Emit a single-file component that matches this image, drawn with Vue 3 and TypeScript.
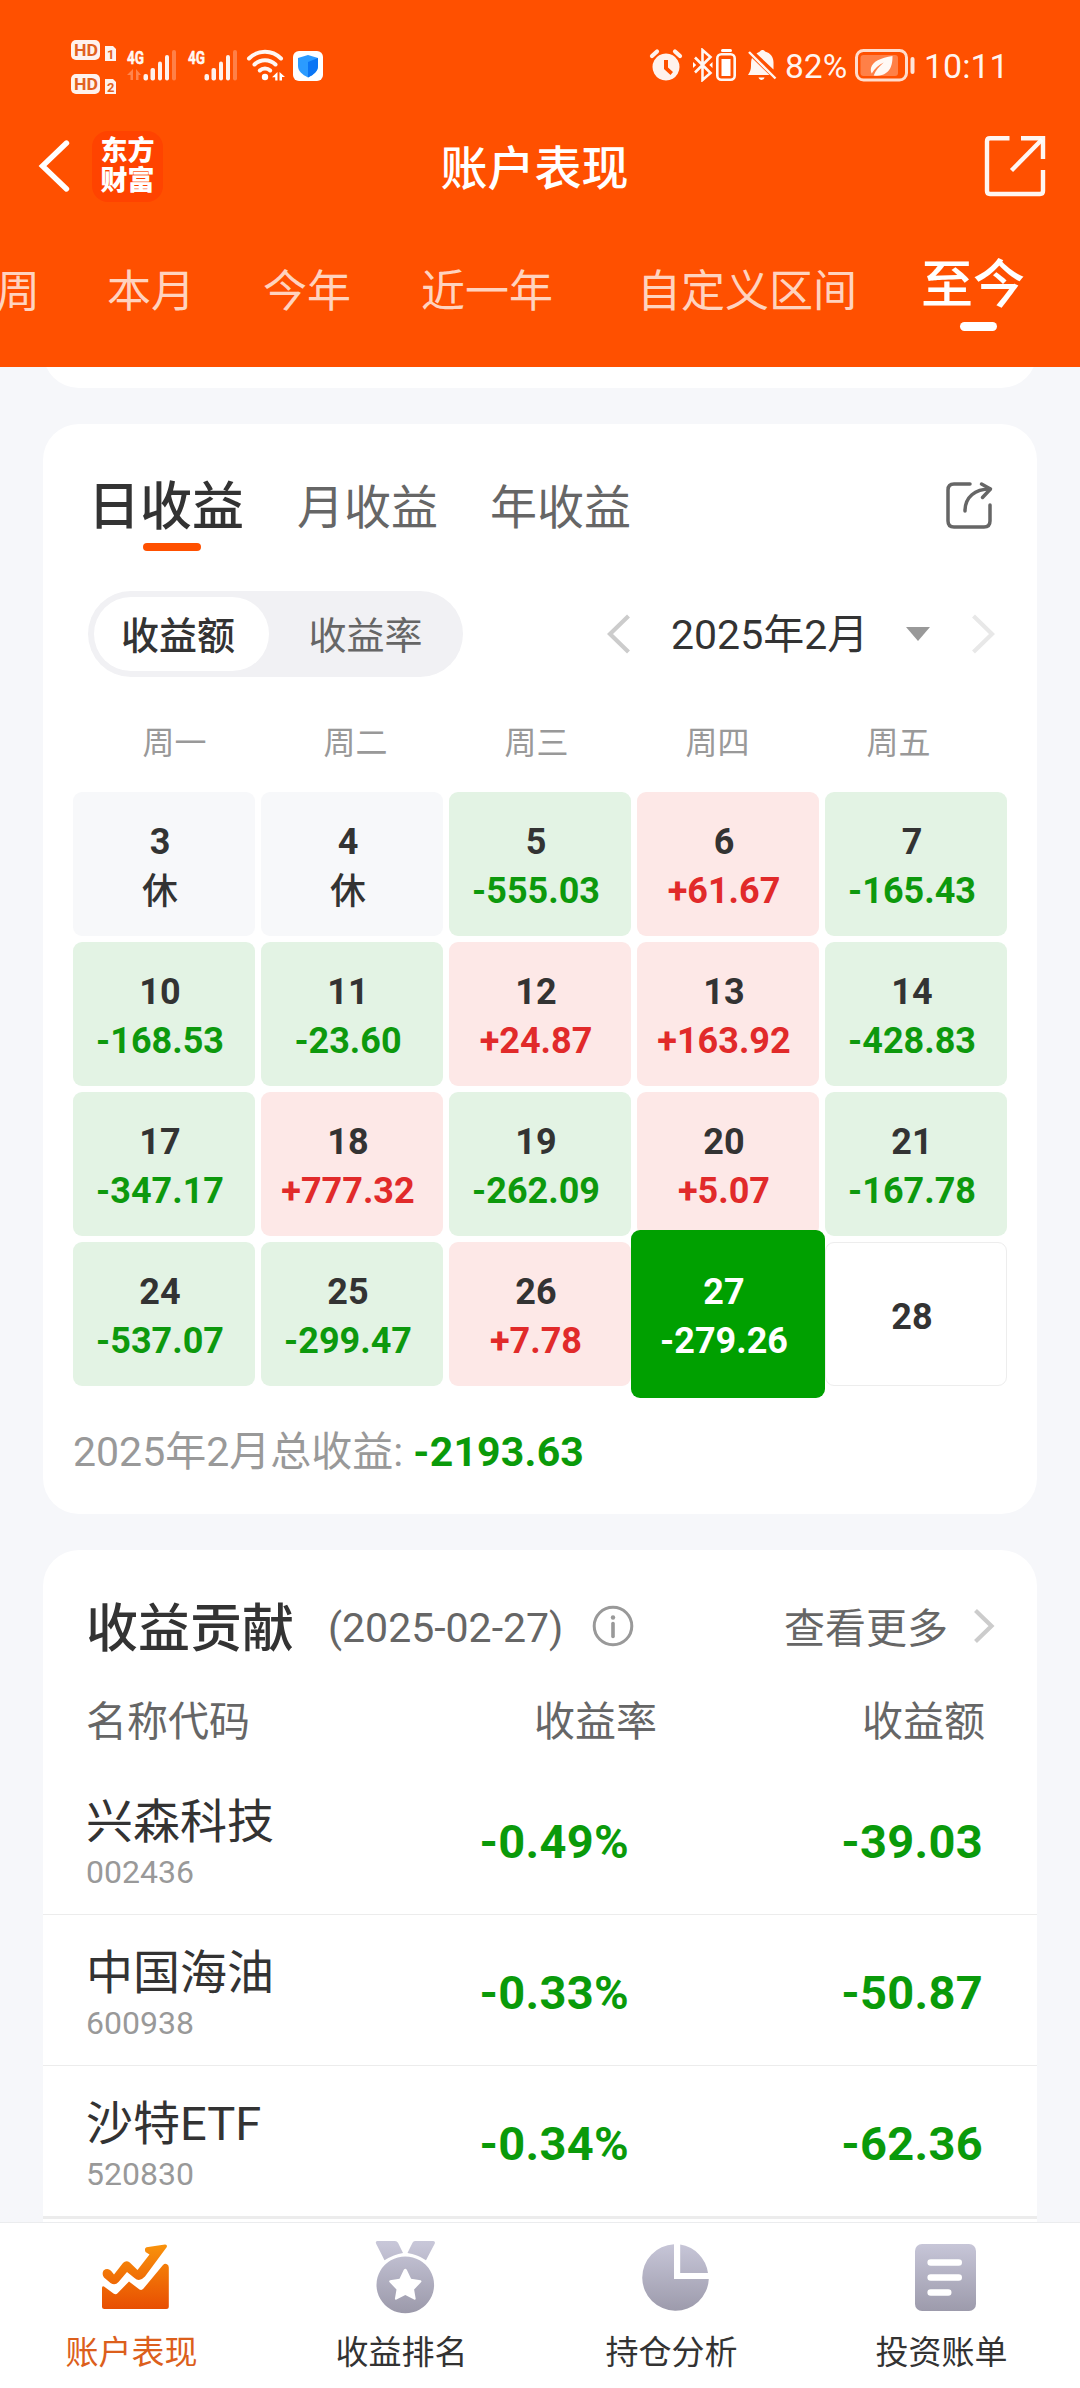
<script setup lang="ts">
interface DayCell {
  day: number
  value?: string
  kind: 'rest' | 'down' | 'up' | 'today' | 'empty'
}

interface Holding {
  name: string
  code: string
  rate: string
  amount: string
}

const ranges = [
  { label: '周', cls: 'r-week' },
  { label: '本月', cls: 'r-month' },
  { label: '今年', cls: 'r-ytd' },
  { label: '近一年', cls: 'r-year' },
  { label: '自定义区间', cls: 'r-custom' },
]

const weekdays = ['周一', '周二', '周三', '周四', '周五']

const days: DayCell[] = [
  { day: 3, value: '休', kind: 'rest' },
  { day: 4, value: '休', kind: 'rest' },
  { day: 5, value: '-555.03', kind: 'down' },
  { day: 6, value: '+61.67', kind: 'up' },
  { day: 7, value: '-165.43', kind: 'down' },
  { day: 10, value: '-168.53', kind: 'down' },
  { day: 11, value: '-23.60', kind: 'down' },
  { day: 12, value: '+24.87', kind: 'up' },
  { day: 13, value: '+163.92', kind: 'up' },
  { day: 14, value: '-428.83', kind: 'down' },
  { day: 17, value: '-347.17', kind: 'down' },
  { day: 18, value: '+777.32', kind: 'up' },
  { day: 19, value: '-262.09', kind: 'down' },
  { day: 20, value: '+5.07', kind: 'up' },
  { day: 21, value: '-167.78', kind: 'down' },
  { day: 24, value: '-537.07', kind: 'down' },
  { day: 25, value: '-299.47', kind: 'down' },
  { day: 26, value: '+7.78', kind: 'up' },
  { day: 27, value: '-279.26', kind: 'today' },
  { day: 28, kind: 'empty' },
]

const holdings: Holding[] = [
  { name: '兴森科技', code: '002436', rate: '-0.49%', amount: '-39.03' },
  { name: '中国海油', code: '600938', rate: '-0.33%', amount: '-50.87' },
  { name: '沙特ETF', code: '520830', rate: '-0.34%', amount: '-62.36' },
]
</script>

<template>
  <div class="screen">
    <header class="top">
      <div class="status">
        <svg class="st-left" width="260" height="60" viewBox="68 36 260 60">
          <g fill="#fff" fill-opacity=".93">
            <rect x="71" y="40" width="29" height="20" rx="5" />
            <path d="M105 46h8l3 3v12h-11z" />
            <rect x="71" y="74" width="29" height="20" rx="5" />
            <path d="M105 79h8l3 3v12h-11z" />
          </g>
          <g fill="#e2611f" class="hd">
            <text x="74" y="56" font-size="17" textLength="24" lengthAdjust="spacingAndGlyphs">HD</text>
            <text x="74" y="90" font-size="17" textLength="24" lengthAdjust="spacingAndGlyphs">HD</text>
            <text x="107" y="58.500" font-size="13">1</text>
            <text x="107" y="91.500" font-size="13">2</text>
          </g>
          <g fill="#fff" fill-opacity=".95" stroke="#fff" stroke-width=".5" class="hd">
            <text x="127" y="63.500" font-size="19" textLength="17" lengthAdjust="spacingAndGlyphs">4G</text>
            <text x="188" y="63.500" font-size="19" textLength="17" lengthAdjust="spacingAndGlyphs">4G</text>
          </g>
          <path d="M133 69v11h-2.500v-5h-3.500zM136 80v-11l5 6h-2.500v5z" fill="#fff" fill-opacity=".3" />
          <g v-for="dx in [0, 61]" :key="dx" :transform="`translate(${dx} 0)`" fill="#fff" fill-opacity=".93">
            <rect x="143.500" y="74" width="4.500" height="6.500" rx="2" />
            <rect x="150.500" y="68" width="4.500" height="12.500" rx="2" />
            <rect x="158" y="61.500" width="4" height="19" rx="2" />
            <rect x="165" y="55" width="4" height="25.500" rx="2" />
            <rect x="172" y="50" width="4" height="30.500" rx="2" fill-opacity=".28" />
          </g>
          <g fill="none" stroke="#fff" stroke-opacity=".95" stroke-width="4" stroke-linecap="round">
            <path d="M249 58.500C258 49.500 272 49.500 281 58.500" />
            <path d="M254.500 64.500C260.500 58.800 269.500 58.800 275.500 64.500" />
            <path d="M259.800 70.500C262.600 67.800 267.400 67.800 270.200 70.500" />
          </g>
          <circle cx="265" cy="77" r="3.200" fill="#fff" />
          <path d="M277.500 72v8.500h-2.300v-3.200H272zM279.500 80.500V72l5.500 5h-3v3.500z" fill="#fff" />
          <rect x="293" y="51" width="30" height="30" rx="6" fill="#fff" />
          <path d="M308 55l10 3v8c0 5-4 8.500-10 11.500-6-3-10-6.500-10-11.500v-8z" fill="#2b9bff" />
          <path d="M308 62l10-4v8c0 5-4 8.500-10 11.500z" fill="#0a75f5" />
        </svg>
        <svg class="st-icons" width="130" height="34" viewBox="648 48 130 34">
          <g fill="#fff" fill-opacity=".93">
            <path fill-rule="evenodd" d="M666 53.500a13.500 13.500 0 1 0 .01 0zM664 60h4v7.500l5 4.500-2.500 3-6.500-6z" />
          </g>
          <path d="M652 56l5-4.500M680 56l-5-4.500" stroke="#fff" stroke-opacity=".93" stroke-width="4.200" stroke-linecap="round" />
          <path d="M695 57.500L710.500 73l-8 7V50l8 7L695 72.500" fill="none" stroke="#fff" stroke-opacity=".95" stroke-width="2.600" />
          <path d="M693 62l3.200 3-3.200 3zM712.500 62l-3.200 3 3.200 3z" fill="#fff" />
          <rect x="717.300" y="54.300" width="17.400" height="25.400" rx="4" fill="none" stroke="#fff" stroke-opacity=".95" stroke-width="2.600" />
          <rect x="721.500" y="59" width="9" height="17" fill="#fff" />
          <rect x="721" y="49" width="11" height="3" rx="1.500" fill="#fff" />
          <path d="M756.500 53.500c1.500-1 3-1.600 3.500-2 1-2 4-2 5 0 5.500 1.500 8.500 5.500 8.500 11v7zM752 58l17.500 17H748c2-3 3-5.500 3-9 0-3.500 0-5.500 1-8z" fill="#fff" fill-opacity=".95" />
          <path d="M749 52l26.500 26.500" stroke="#fff" stroke-opacity=".95" stroke-width="2.400" />
          <path d="M758.500 77.500h6c-1 3.200-5 3.200-6 0z" fill="#fff" />
        </svg>
        <span class="st-pct">82%</span>
        <svg class="st-batt" width="62" height="34" viewBox="854 48 62 34">
          <rect x="856.500" y="50.500" width="50" height="29.500" rx="7" fill="none" stroke="#fff" stroke-opacity=".8" stroke-width="3" />
          <rect x="860.500" y="55" width="37.500" height="21" rx="3" fill="#fff" fill-opacity=".28" />
          <rect x="910.500" y="57" width="4" height="17" rx="2" fill="#fff" fill-opacity=".85" />
          <path d="M892.500 56c-12 2-20 5.500-21.500 12-.5 2.500 0 4 .7 5.500 3-5 7-8.500 12-11-4.500 4-8 7.500-10 13 9 1.500 15-3 17.300-9 1.300-3.500 1.500-7 1.500-10.500z" fill="#fff" fill-opacity=".95" />
        </svg>
        <span class="st-time">10:11</span>
      </div>

      <div class="titlebar">
        <div class="side">
          <svg width="36" height="60" viewBox="36 136 36 60">
            <path d="M66.500 143L42.500 166l24 23" fill="none" stroke="#fff" stroke-width="5.400" stroke-linecap="round" stroke-linejoin="miter" />
          </svg>
          <div class="logo"><span>东方</span><span>财富</span></div>
        </div>
        <h1>账户表现</h1>
        <div class="side end">
          <svg width="62" height="62" viewBox="984 134 62 62" fill="none" stroke="#fff" stroke-width="4.400" stroke-opacity=".95">
            <path d="M1009.500 137.200H990q-3 0-3 3V190q0 3 3 3h50q3 0 3-3v-21" />
            <path d="M1021 137.200h22V158" />
            <path d="M1042 138.500l-30.500 31" />
          </svg>
        </div>
      </div>

      <nav class="ranges">
        <span v-for="r in ranges" :key="r.label" :class="r.cls">{{ r.label }}</span>
        <span class="r-active">至今</span>
      </nav>
    </header>

    <main class="body">
      <div class="card tail"></div>

      <section class="card calendar">
        <div class="tabs">
          <span class="tab on">日收益</span>
          <span class="tab t-month">月收益</span>
          <span class="tab t-year">年收益</span>
          <svg class="share" width="50" height="50" viewBox="944 480 50 50" fill="none" stroke="#666" stroke-width="3.500" stroke-linecap="round" stroke-linejoin="round">
            <path d="M970 484h-16q-6 0-6 6v31q0 6 6 6h30q6 0 6-6v-16" />
            <path d="M965 511c0-14 10-22 25-22" />
            <path d="M981.500 484l9 5-8 8.500" />
          </svg>
        </div>

        <div class="controls">
          <div class="segment">
            <span class="seg on">收益额</span>
            <span class="seg off">收益率</span>
          </div>
          <svg class="prev" width="24" height="40" viewBox="0 0 24 40">
            <path d="M21.500 2L3 20l18.500 18" fill="none" stroke="#ccc" stroke-width="4.200" />
          </svg>
          <span class="month">2025年2月</span>
          <svg class="caret" width="24" height="14" viewBox="0 0 24 14"><path d="M0 0h24L12 14z" fill="#999" /></svg>
          <svg class="next" width="24" height="40" viewBox="0 0 24 40">
            <path d="M2.500 2L21 20 2.500 38" fill="none" stroke="#e8e8e8" stroke-width="4.200" />
          </svg>
        </div>

        <div class="weekdays">
          <span v-for="w in weekdays" :key="w">{{ w }}</span>
        </div>

        <div class="grid">
          <div v-for="d in days" :key="d.day" class="cell" :class="d.kind">
            <span class="num">{{ d.day }}</span>
            <span v-if="d.value" class="val">{{ d.value }}</span>
          </div>
        </div>

        <p class="total">2025年2月总收益: <b>-2193.63</b></p>
      </section>

      <section class="card contrib">
        <div class="c-head">
          <h2>收益贡献</h2>
          <span class="date">(2025-02-27)</span>
          <svg class="info" width="42" height="42" viewBox="0 0 42 42">
            <circle cx="21" cy="21" r="18.800" fill="none" stroke="#999" stroke-width="3" />
            <circle cx="21" cy="12.500" r="2.200" fill="#999" />
            <path d="M21 18.500v13" stroke="#999" stroke-width="3.600" stroke-linecap="round" />
          </svg>
          <span class="more">查看更多</span>
          <svg class="chev" width="22" height="36" viewBox="0 0 22 36">
            <path d="M2.500 2.500L18.500 18l-16 15.500" fill="none" stroke="#ccc" stroke-width="4.200" />
          </svg>
        </div>
        <div class="row thead">
          <span class="c1">名称代码</span>
          <span class="c2">收益率</span>
          <span class="c3">收益额</span>
        </div>
        <div v-for="h in holdings" :key="h.code" class="row item">
          <div class="c1">
            <div class="name">{{ h.name }}</div>
            <div class="code">{{ h.code }}</div>
          </div>
          <span class="c2">{{ h.rate }}</span>
          <span class="c3">{{ h.amount }}</span>
        </div>
      </section>
    </main>

    <footer class="nav">
      <div class="nav-item on">
        <svg width="76" height="76" viewBox="97 2239 76 76">
          <defs>
            <linearGradient id="warm" gradientUnits="userSpaceOnUse" x1="0" y1="2244" x2="0" y2="2309">
              <stop offset="0" stop-color="#f9930b" /><stop offset="1" stop-color="#e84e02" />
            </linearGradient>
          </defs>
          <g fill="url(#warm)">
            <path d="M104 2286.500L113.500 2293.500q2.300 1.700 4.300-.5L129 2281.500 139.500 2289.500q2.200 1.300 4-1L163 2265q2-2 4-.8 1.800 1 1.800 3.300V2306.500q0 2.500-2.500 2.500H104.500q-2.500 0-2.500-2.500V2288q0-2.500 2-1.500z" />
            <path d="M103.500 2270.500q4-3 7.500.3l3 3.700 9-11.500q3.200-3.400 6.800-.4l7.700 7.400 12-15.500-4-2.500q-1.500-3.500 1-4.800l18.500-2.700q2.500 0 1.800 2.500L145 2276.500q-5.500 6-10.500 1.500L127 2272l-8.500 10q-3.500 4-8 1l-6.500-5.500q-2.500-3.500-.5-7z" />
          </g>
        </svg>
        <span>账户表现</span>
      </div>
      <div class="nav-item">
        <svg width="76" height="76" viewBox="368 2239 76 76">
          <defs>
            <linearGradient id="cool" gradientUnits="userSpaceOnUse" x1="0" y1="2242" x2="0" y2="2312">
              <stop offset="0" stop-color="#c8c7d9" /><stop offset="1" stop-color="#9c9aab" />
            </linearGradient>
          </defs>
          <path fill="url(#cool)" d="M378.500 2241H396q2 0 3 1.800L404 2253q-9 1.500-18.500 7.200L377 2243.500q-.8-2.500 1.500-2.500zM416 2241h18q2.500 0 1.800 2.500L427 2260.200q-9-6-18.500-7.200l5-10.200q.8-1.800 2.500-1.800z" />
          <path fill="url(#cool)" fill-rule="evenodd" d="M406.300 2256.500a28.800 28.400 0 1 1-.02 0zM404.800 2269.800l-4.300 9-9.500 1.500q-1.500.6-.4 2l6.900 7.200-1.600 9.200q.2 1.500 1.600.9l8.800-4.500 8.800 4.500q1.400.6 1.600-.9l-1.600-9.200 6.900-7.200q1.100-1.400-.4-2l-9.500-1.500-4.300-9q-1.500-2-3 0z" />
        </svg>
        <span>收益排名</span>
      </div>
      <div class="nav-item">
        <svg width="76" height="76" viewBox="637 2239 76 76">
          <defs>
            <linearGradient id="cool-pie" gradientUnits="userSpaceOnUse" x1="0" y1="2242" x2="0" y2="2312">
              <stop offset="0" stop-color="#c8c7d9" /><stop offset="1" stop-color="#9c9aab" />
            </linearGradient>
          </defs>
          <path fill="url(#cool-pie)" d="M674 2244.300V2279h34.800A33.300 33.200 0 1 1 674 2244.300zM680.200 2244.500A33.300 33.200 0 0 1 708 2273h-27.800z" />
        </svg>
        <span>持仓分析</span>
      </div>
      <div class="nav-item">
        <svg width="76" height="76" viewBox="907 2239 76 76">
          <defs>
            <linearGradient id="cool-doc" gradientUnits="userSpaceOnUse" x1="0" y1="2242" x2="0" y2="2312">
              <stop offset="0" stop-color="#c8c7d9" /><stop offset="1" stop-color="#9c9aab" />
            </linearGradient>
          </defs>
          <rect x="915" y="2244" width="61" height="67" rx="7" fill="url(#cool-doc)" />
          <path d="M930.700 2262.500h28M930.700 2277.500h28M930.700 2292.500h17.500" stroke="#fff" stroke-width="6.600" stroke-linecap="round" />
        </svg>
        <span>投资账单</span>
      </div>
    </footer>
  </div>
</template>

<style>
body {
  margin: 0;
}
</style>

<style scoped>
.screen {
  display: flex;
  flex-direction: column;
  width: 1080px;
  height: 2388px;
  overflow: hidden;
  background: #f6f7fa;
  color: #333;
  font-family: Roboto, 'Noto Sans CJK SC', sans-serif;
  white-space: nowrap;
}

svg {
  display: block;
  flex: none;
}

/* header */
.top {
  flex: none;
  height: 367px;
  background: #ff5000;
  color: #fff;
}

.status {
  display: flex;
  height: 84px;
  padding: 36px 0 0 68px;
}

.st-icons {
  margin: 12px 0 0 320px;
}

.st-pct,
.st-time {
  height: 60px;
  font-size: 34px;
  line-height: 61px;
  color: rgba(255, 255, 255, 0.95);
}

.st-pct {
  width: 69px;
  padding-left: 7px;
  font-size: 33.5px;
}

.st-batt {
  margin-top: 12px;
}

.st-time {
  padding-left: 8px;
}

.hd {
  font-family: Roboto, sans-serif;
  font-weight: 700;
}

.titlebar {
  display: flex;
  align-items: center;
  height: 92px;
  padding: 0 34px 0 36px;
}

.side {
  display: flex;
  align-items: center;
  width: 300px;
}

.side.end {
  justify-content: flex-end;
}

.logo {
  display: flex;
  flex-direction: column;
  align-items: center;
  justify-content: center;
  width: 71px;
  height: 71px;
  margin-left: 20px;
  border-radius: 16px;
  background: #ff4300;
  font-size: 27px;
  font-weight: 900;
  line-height: 30px;
}

.titlebar h1 {
  flex: 1;
  margin: 0;
  padding: 6px 13px 0 0;
  font-size: 47px;
  font-weight: 500;
  line-height: 60px;
  text-align: center;
}

.ranges {
  display: flex;
  height: 155px;
  font-size: 44px;
  line-height: 160px;
  color: rgba(255, 255, 255, 0.76);
}

.r-week {
  margin-left: -4px;
}

.r-month {
  margin-left: 67px;
}

.r-ytd {
  margin-left: 68px;
}

.r-year {
  margin-left: 70px;
}

.r-custom {
  margin-left: 84px;
}

.r-active {
  position: relative;
  margin-left: 64px;
  color: #fff;
  font-size: 52px;
  font-weight: 500;
  line-height: 148px;
}

.r-active::after {
  content: '';
  position: absolute;
  left: 39px;
  top: 110px;
  width: 37px;
  height: 9px;
  border-radius: 5px;
  background: #fff;
}

/* body */
.body {
  flex: 1;
  min-height: 0;
  overflow: hidden;
  padding: 0 43px;
}

.card {
  border-radius: 36px;
  background: #fff;
}

.tail {
  height: 72px;
  margin-top: -51px;
}

.calendar {
  box-sizing: border-box;
  height: 1090px;
  margin-top: 36px;
  padding: 50px 30px 0;
}

.tabs {
  display: flex;
  align-items: center;
  height: 68px;
  padding: 0 13px 0 15px;
  color: #666;
  font-size: 47px;
  line-height: 70px;
}

.tab.on {
  position: relative;
  color: #333;
  font-size: 52px;
  font-weight: 500;
}

.tab.on::after {
  content: '';
  position: absolute;
  left: 55px;
  top: 70px;
  width: 58px;
  height: 8px;
  border-radius: 4px;
  background: #ff5000;
}

.t-month {
  margin-left: 53px;
}

.t-year {
  margin-left: 52px;
}

.share {
  margin-left: auto;
  margin-top: -6px;
}

.controls {
  display: flex;
  align-items: center;
  height: 86px;
  margin-top: 49px;
  padding: 0 12px 0 15px;
}

.segment {
  box-sizing: border-box;
  display: flex;
  width: 375px;
  height: 86px;
  padding: 6px;
  border-radius: 43px;
  background: #f1f1f4;
  font-size: 38px;
  line-height: 79px;
}

.seg {
  box-sizing: border-box;
  text-align: center;
}

.seg.on {
  width: 175px;
  height: 74px;
  padding-right: 7px;
  border-radius: 37px;
  background: #fff;
  color: #333;
  font-weight: 500;
}

.seg.off {
  flex: 1;
  padding-left: 5px;
  color: #666;
}

.prev {
  margin-left: 144px;
}

.month {
  margin-left: 40px;
  padding-top: 3px;
  font-size: 41px;
  line-height: 83px;
}

.caret {
  margin-left: auto;
}

.next {
  margin-left: 41px;
}

.weekdays {
  display: flex;
  height: 50px;
  margin: 41px 0 24px 11px;
  color: #999;
  font-size: 32px;
  line-height: 50px;
  text-align: center;
}

.weekdays span {
  width: 181px;
}

.grid {
  display: grid;
  grid-template-columns: repeat(5, 182px);
  grid-auto-rows: 144px;
  gap: 6px;
}

.cell {
  display: flex;
  flex-direction: column;
  align-items: center;
  justify-content: center;
  box-sizing: border-box;
  padding: 6px 8px 0 0;
  border-radius: 9px;
  font-size: 36px;
  font-weight: 700;
  line-height: 49px;
}

.rest {
  background: #f7f8fa;
}

.rest .val {
  padding-top: 2px;
  line-height: 47px;
  font-weight: 500;
}

.down {
  background: #e3f3e4;
}

.down .val {
  color: #0d990d;
}

.up {
  background: #fde8e7;
}

.up .val {
  color: #e12a2a;
}

.today {
  z-index: 1;
  margin: -12px -6px;
  background: #00a000;
  color: #fff;
}

.empty {
  border: 1px solid #ededed;
}

.total {
  margin: 38px 0 0;
  color: #999;
  font-size: 41px;
  line-height: 56px;
}

.total b {
  color: #0a9a0a;
  font-weight: 700;
  letter-spacing: 0.2px;
}

/* contribution */
.contrib {
  height: 900px;
  margin-top: 36px;
}

.c-head {
  display: flex;
  align-items: center;
  height: 120px;
  padding: 18px 42px 0 43px;
  line-height: 64px;
}

.c-head h2 {
  margin: 0;
  padding-top: 4px;
  font-size: 52px;
  font-weight: 500;
}

.date {
  margin-left: 34px;
  color: #666;
  font-size: 41px;
}

.info {
  margin: -4px 0 0 29px;
}

.more {
  margin-left: auto;
  padding-top: 2px;
  color: #666;
  font-size: 41px;
}

.chev {
  margin: -4px 0 0 25px;
}

.row {
  display: flex;
  align-items: center;
  padding: 0 52px 0 43px;
}

.thead {
  height: 76px;
  color: #666;
  font-size: 41px;
}

.thead span {
  margin-top: -9px;
  line-height: 60px;
}

.c1 {
  width: 300px;
}

.c2 {
  width: 243px;
  text-align: right;
}

.c3 {
  flex: 1;
  text-align: right;
}

.thead .c2 {
  width: 271px;
}

.item {
  height: 150px;
  border-bottom: 1px solid #ececec;
}

.item:last-child {
  border-bottom-width: 3px;
}

.item .c2,
.item .c3 {
  padding-top: 5px;
  color: #0a9a0a;
  font-size: 47px;
  font-weight: 700;
  letter-spacing: 0.3px;
}

.item .c3 {
  padding-right: 2px;
}

.name {
  padding-top: 9px;
  font-size: 47px;
  line-height: 57px;
}

.code {
  color: #999;
  font-size: 32px;
  line-height: 44px;
}

/* bottom navigation */
.nav {
  box-sizing: border-box;
  display: flex;
  flex: none;
  height: 166px;
  border-top: 1px solid #ebecee;
  background: #fff;
}

.nav-item {
  display: flex;
  flex-direction: column;
  align-items: center;
  width: 270px;
  padding-top: 16px;
}

.nav-item span {
  padding-right: 7px;
  margin-top: 16px;
  font-size: 33px;
  line-height: 44px;
}

.nav-item.on span {
  color: #dc5f1c;
}
</style>
